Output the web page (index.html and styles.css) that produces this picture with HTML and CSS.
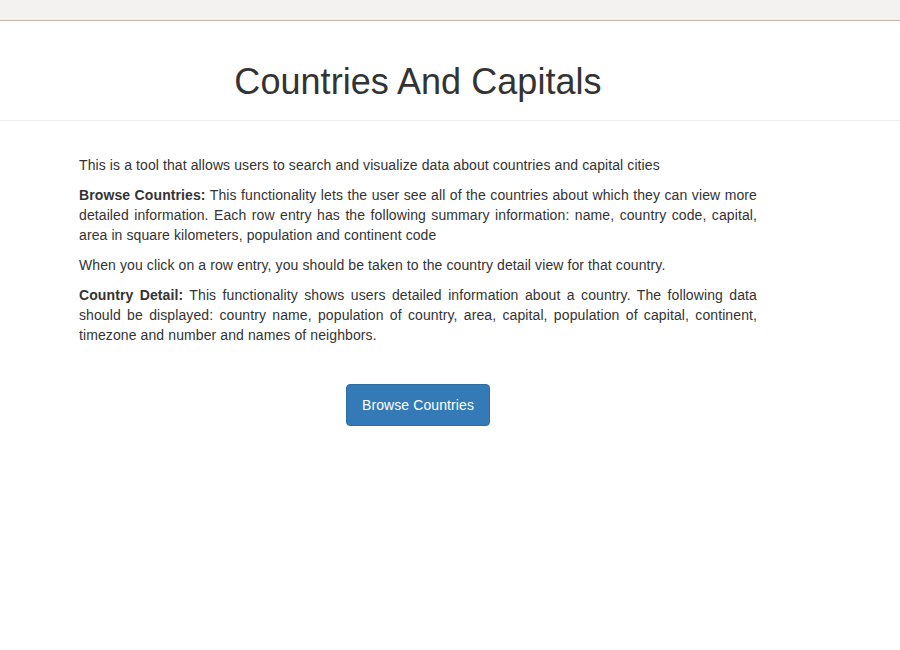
FILE: index.html
```html
<!DOCTYPE html>
<html>
<head>
<meta charset="utf-8">
<title>Countries And Capitals</title>
<link rel="stylesheet" href="styles.css">
</head>
<body>
<div class="topbar"></div>
<header class="header">
  <div class="column">
    <h1 class="title">Countries And Capitals</h1>
  </div>
</header>
<main class="column content">
  <p>This is a tool that allows users to search and visualize data about countries and capital cities</p>
  <p><strong>Browse Countries:</strong> This functionality lets the user see all of the countries about which they can view more detailed information. Each row entry has the following summary information: name, country code, capital, area in square kilometers, population and continent code</p>
  <p>When you click on a row entry, you should be taken to the country detail view for that country.</p>
  <p><strong>Country Detail:</strong> This functionality shows users detailed information about a country. The following data should be displayed: country name, population of country, area, capital, population of capital, continent, timezone and number and names of neighbors.</p>
  <div class="actions">
    <a class="btn" href="#">Browse Countries</a>
  </div>
</main>
</body>
</html>
```

FILE: styles.css
```css
html, body {
  margin: 0;
  padding: 0;
  background: #fff;
}
body {
  font-family: "Liberation Sans", Arial, Helvetica, sans-serif;
  font-size: 14px;
  line-height: 20px;
  letter-spacing: 0.1px;
  color: #333;
}
.topbar {
  height: 20px;
  background: #f4f2f0;
  border-bottom: 1px solid #c2b6ab;
}
.header {
  border-bottom: 1px solid #eee;
  padding: 41px 0 18px;
}
.column {
  width: 678px;
  margin-left: 79px;
}
.title {
  margin: 0;
  text-align: center;
  font-size: 36px;
  font-weight: 500;
  line-height: 40px;
  letter-spacing: 0.05px;
  color: #333;
}
.content {
  padding-top: 34px;
}
.content p {
  margin: 0 0 10px;
  text-align: justify;
}
.content strong {
  font-weight: 700;
}
.actions {
  display: flex;
  justify-content: center;
  padding-top: 29px;
}
.btn {
  display: inline-block;
  padding: 10px 15px;
  font-size: 14px;
  line-height: 20px;
  color: #fff;
  text-decoration: none;
  background: #337ab7;
  border: 1px solid #2e6da4;
  border-radius: 4px;
}
```
